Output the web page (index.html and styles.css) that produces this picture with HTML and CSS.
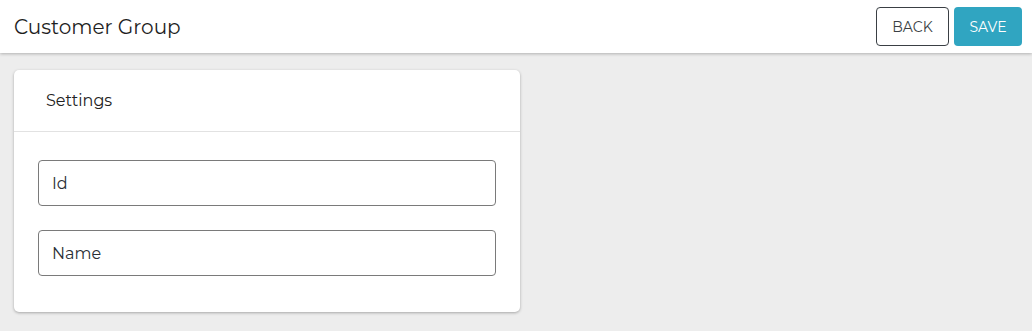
FILE: index.html
```html
<!DOCTYPE html>
<html lang="en">

<head>
  <meta charset="UTF-8">
  <meta name="viewport" content="width=device-width, initial-scale=1.0">
  <title>Customer Group</title>
  <link rel="stylesheet" href="styles.css">
</head>

<body>
  <header class="topbar">
    <h1>Customer Group</h1>
    <div class="actions">
      <button class="btn btn-outline">BACK</button>
      <button class="btn btn-primary">SAVE</button>
    </div>
  </header>

  <main class="content">
    <section class="card">
      <div class="card-header">Settings</div>
      <div class="card-body">
        <input type="text" class="field" placeholder="Id">
        <input type="text" class="field" placeholder="Name">
      </div>
    </section>
  </main>
</body>

</html>
```

FILE: styles.css
```css
* {
  box-sizing: border-box;
}

body {
  margin: 0;
  padding: 0;
  font-family: 'Montserrat', 'DejaVu Sans', sans-serif;
  background: #ededed;
  color: #222;
  height: 100vh;
}

.topbar {
  height: 53px;
  background: #fff;
  display: flex;
  align-items: center;
  justify-content: space-between;
  padding: 0 10px 0 14px;
  box-shadow: 0 1px 3px rgba(0, 0, 0, 0.25);
  position: relative;
}

.topbar h1 {
  margin: 0;
  font-size: 20px;
  font-weight: 400;
  color: #1e1e1e;
}

.actions {
  display: flex;
  gap: 5px;
}

.btn {
  height: 39px;
  padding: 0;
  font-family: inherit;
  font-size: 14px;
  border-radius: 4px;
  cursor: pointer;
}

.btn-outline {
  background: #fff;
  border: 1px solid #3a3f44;
  color: #3a3f44;
  width: 73px;
}

.btn-primary {
  background: #30a5c1;
  border: none;
  color: #fff;
  width: 68px;
}

.content {
  padding: 17px 14px;
}

.card {
  width: 506px;
  background: #fff;
  border-radius: 5px;
  box-shadow: 0 1px 3px rgba(0, 0, 0, 0.3);
}

.card-header {
  height: 62px;
  display: flex;
  align-items: center;
  padding-left: 32px;
  font-size: 16px;
  border-bottom: 1px solid #e2e2e2;
}

.card-body {
  display: flex;
  flex-direction: column;
  gap: 24px;
  padding: 28px 24px 36px;
}

.field {
  height: 46px;
  width: 100%;
  padding: 0 13px;
  font-family: inherit;
  font-size: 16px;
  border: 1px solid #7a7a7a;
  border-radius: 4px;
  outline: none;
}

.field::placeholder {
  color: #2a2f36;
}
```
